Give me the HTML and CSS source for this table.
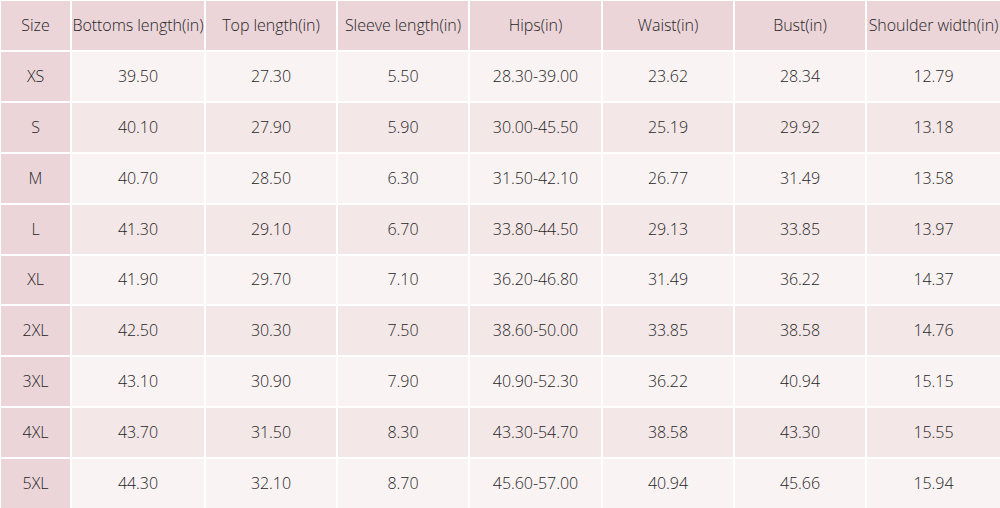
FILE: index.html
```html
<!DOCTYPE html>
<html>
<head>
<meta charset="utf-8">
<link rel="stylesheet" href="styles.css">
</head>
<body>
<div class="chart">
  <div class="cell head">Size</div><div class="cell head">Bottoms length(in)</div><div class="cell head">Top length(in)</div><div class="cell head">Sleeve length(in)</div><div class="cell head">Hips(in)</div><div class="cell head">Waist(in)</div><div class="cell head">Bust(in)</div><div class="cell head">Shoulder width(in)</div>

  <div class="cell size">XS</div><div class="cell odd">39.50</div><div class="cell odd">27.30</div><div class="cell odd">5.50</div><div class="cell odd">28.30-39.00</div><div class="cell odd">23.62</div><div class="cell odd">28.34</div><div class="cell odd">12.79</div>

  <div class="cell size">S</div><div class="cell even">40.10</div><div class="cell even">27.90</div><div class="cell even">5.90</div><div class="cell even">30.00-45.50</div><div class="cell even">25.19</div><div class="cell even">29.92</div><div class="cell even">13.18</div>

  <div class="cell size">M</div><div class="cell odd">40.70</div><div class="cell odd">28.50</div><div class="cell odd">6.30</div><div class="cell odd">31.50-42.10</div><div class="cell odd">26.77</div><div class="cell odd">31.49</div><div class="cell odd">13.58</div>

  <div class="cell size">L</div><div class="cell even">41.30</div><div class="cell even">29.10</div><div class="cell even">6.70</div><div class="cell even">33.80-44.50</div><div class="cell even">29.13</div><div class="cell even">33.85</div><div class="cell even">13.97</div>

  <div class="cell size">XL</div><div class="cell odd">41.90</div><div class="cell odd">29.70</div><div class="cell odd">7.10</div><div class="cell odd">36.20-46.80</div><div class="cell odd">31.49</div><div class="cell odd">36.22</div><div class="cell odd">14.37</div>

  <div class="cell size">2XL</div><div class="cell even">42.50</div><div class="cell even">30.30</div><div class="cell even">7.50</div><div class="cell even">38.60-50.00</div><div class="cell even">33.85</div><div class="cell even">38.58</div><div class="cell even">14.76</div>

  <div class="cell size">3XL</div><div class="cell odd">43.10</div><div class="cell odd">30.90</div><div class="cell odd">7.90</div><div class="cell odd">40.90-52.30</div><div class="cell odd">36.22</div><div class="cell odd">40.94</div><div class="cell odd">15.15</div>

  <div class="cell size">4XL</div><div class="cell even">43.70</div><div class="cell even">31.50</div><div class="cell even">8.30</div><div class="cell even">43.30-54.70</div><div class="cell even">38.58</div><div class="cell even">43.30</div><div class="cell even">15.55</div>

  <div class="cell size">5XL</div><div class="cell odd">44.30</div><div class="cell odd">32.10</div><div class="cell odd">8.70</div><div class="cell odd">45.60-57.00</div><div class="cell odd">40.94</div><div class="cell odd">45.66</div><div class="cell odd">15.94</div>
</div>
</body>
</html>
```

FILE: styles.css
```css
html, body {
  margin: 0;
  padding: 0;
  background: #ffffff;
}

.chart {
  box-sizing: border-box;
  width: 1000px;
  height: 508px;
  padding: 1px 0 0 1px;
  display: grid;
  grid-template-columns: 69px 132px 130px 130px 131px 130px 130px 133px;
  grid-template-rows: repeat(10, 1fr);
  gap: 2px;
  background: #ffffff;
  font-family: "Open Sans", Lato, sans-serif;
  font-weight: 300;
  font-size: 16px;
  letter-spacing: -0.05px;
  color: #262626;
}

.cell {
  display: flex;
  align-items: center;
  justify-content: center;
  white-space: nowrap;
  overflow: visible;
  padding-bottom: 1px;
}

.head,
.size {
  background: #ebd5d9;
}

.odd {
  background: #faf3f3;
}

.even {
  background: #f3e7e7;
}
```
